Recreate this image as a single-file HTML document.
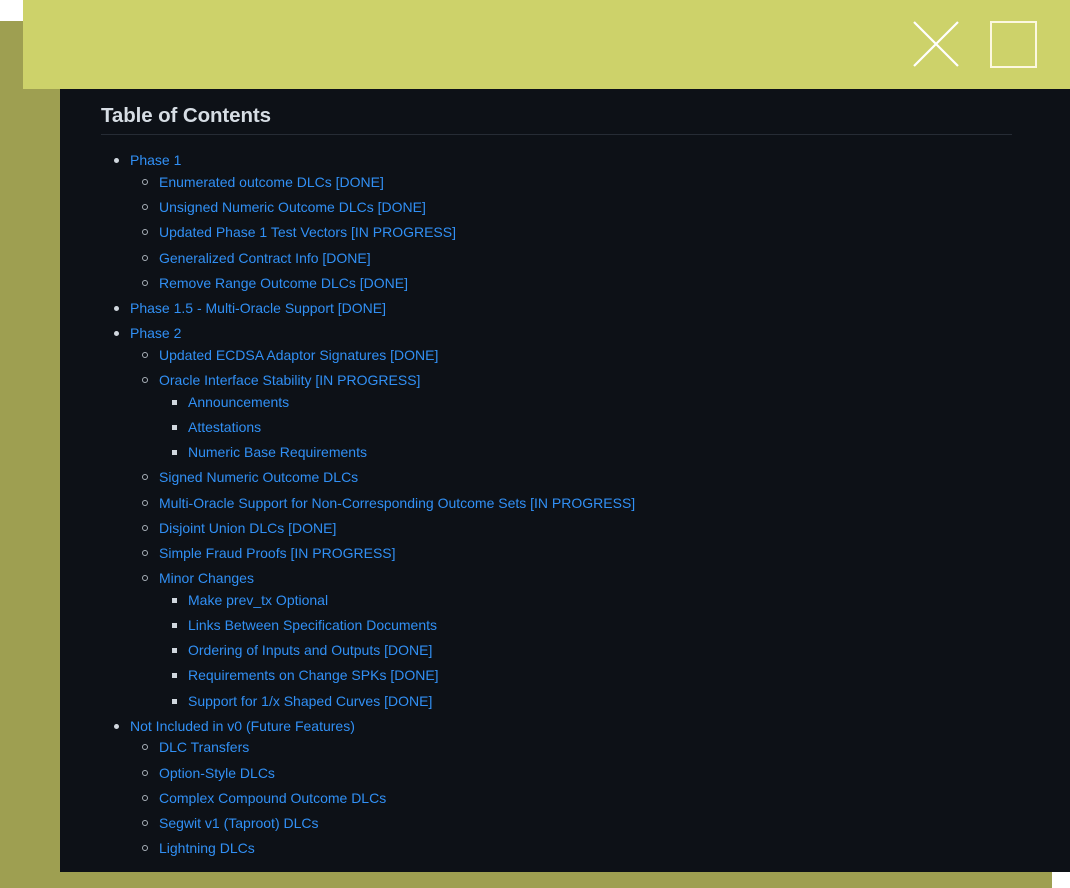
<!DOCTYPE html>
<html><head><meta charset="utf-8"><style>
html,body{margin:0;padding:0;width:1070px;height:888px;overflow:hidden;background:#fff;position:relative;font-family:"Liberation Sans",sans-serif}
.olive{position:absolute;left:0;top:21px;width:1052px;height:867px;background:#9e9f51}
.bar{position:absolute;left:23px;top:0;width:1047px;height:89px;background:#cdd26a}
.dark{position:absolute;left:60px;top:89px;width:1010px;height:783px;background:#0d1117}
h1{position:absolute;left:101px;top:102px;margin:0;font-size:20.5px;font-weight:bold;color:#d6dde4;line-height:28px;letter-spacing:-0.1px}
.hr{position:absolute;left:101px;top:134px;width:911px;height:1px;background:#262c35}
.l{position:absolute;font-size:14px;line-height:21px;color:#3190f5;white-space:nowrap}
.b{position:absolute;box-sizing:border-box}
.d{width:5px;height:5px;border-radius:50%;background:#d0d7de}
.c{width:6px;height:6px;border-radius:50%;border:1.3px solid #a8b0b8}
.s{width:5px;height:5px;background:#d0d7de}
</style></head><body>
<div class="olive"></div>
<div class="bar"></div>
<svg style="position:absolute;left:900px;top:10px" width="150" height="70">
<path d="M14 12 L58 56 M58 12 L14 56" stroke="#fff" stroke-width="2.2"/>
<rect x="91" y="12" width="45" height="45" fill="none" stroke="#fcf8e0" stroke-width="2"/>
</svg>
<div class="dark"></div>
<h1>Table of Contents</h1>
<div class="hr"></div>
<div id="list"></div>
<script>
var items=[
[1,160,"Phase 1"],[2,182,"Enumerated outcome DLCs [DONE]"],[2,207,"Unsigned Numeric Outcome DLCs [DONE]"],[2,232,"Updated Phase 1 Test Vectors [IN PROGRESS]"],[2,258,"Generalized Contract Info [DONE]"],[2,283,"Remove Range Outcome DLCs [DONE]"],
[1,308,"Phase 1.5 - Multi-Oracle Support [DONE]"],[1,333,"Phase 2"],[2,355,"Updated ECDSA Adaptor Signatures [DONE]"],[2,380,"Oracle Interface Stability [IN PROGRESS]"],
[3,402,"Announcements"],[3,427,"Attestations"],[3,452,"Numeric Base Requirements"],
[2,477,"Signed Numeric Outcome DLCs"],[2,503,"Multi-Oracle Support for Non-Corresponding Outcome Sets [IN PROGRESS]"],[2,528,"Disjoint Union DLCs [DONE]"],[2,553,"Simple Fraud Proofs [IN PROGRESS]"],[2,578,"Minor Changes"],
[3,600,"Make prev_tx Optional"],[3,625,"Links Between Specification Documents"],[3,650,"Ordering of Inputs and Outputs [DONE]"],[3,675,"Requirements on Change SPKs [DONE]"],[3,701,"Support for 1/x Shaped Curves [DONE]"],
[1,726,"Not Included in v0 (Future Features)"],[2,747,"DLC Transfers"],[2,773,"Option-Style DLCs"],[2,798,"Complex Compound Outcome DLCs"],[2,823,"Segwit v1 (Taproot) DLCs"],[2,848,"Lightning DLCs"]];
var h="";
items.forEach(function(it){
var lv=it[0],y=it[1];
var tx=[0,130,159,188][lv];
var bx=[0,114,142,172][lv];
var cls=["","d","c","s"][lv];
var sz=lv==2?6:5;
h+='<div class="b '+cls+'" style="left:'+bx+'px;top:'+(y-Math.floor(sz/2))+'px"></div>';
h+='<div class="l" style="left:'+tx+'px;top:'+(y-10)+'px">'+it[2].replace(/&/g,"&amp;")+'</div>';
});
document.getElementById("list").innerHTML=h;
</script>
</body></html>
